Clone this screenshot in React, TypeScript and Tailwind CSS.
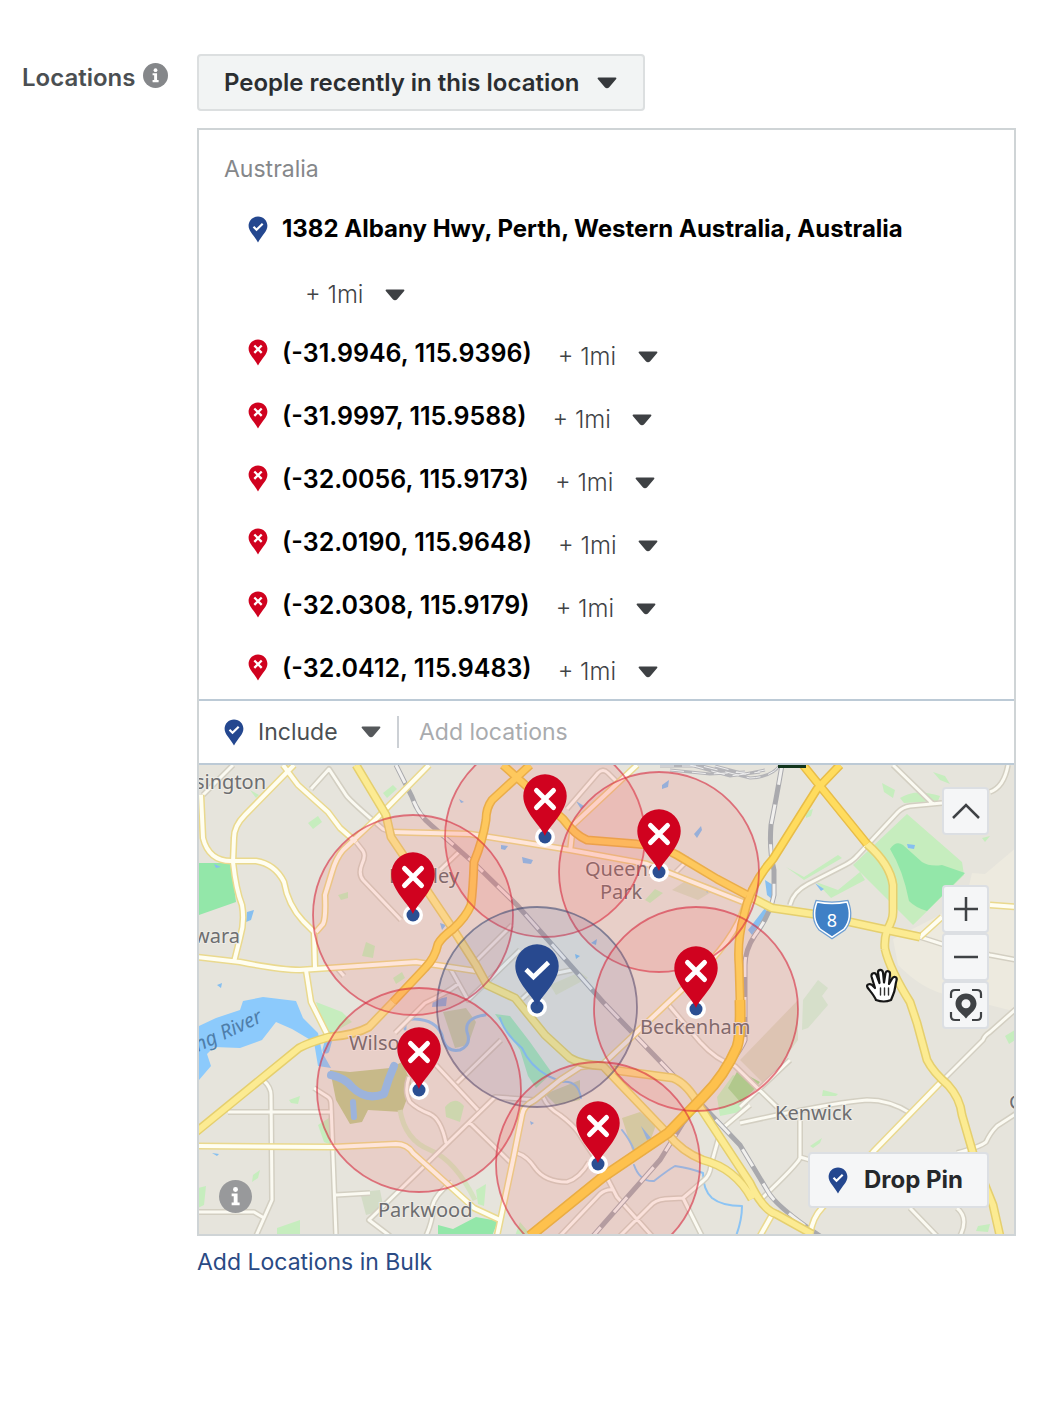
import React from 'react';

type PinKind = 'include' | 'exclude';

const excluded = [
  '(-31.9946, 115.9396)',
  '(-31.9997, 115.9588)',
  '(-32.0056, 115.9173)',
  '(-32.0190, 115.9648)',
  '(-32.0308, 115.9179)',
  '(-32.0412, 115.9483)',
];

const mapPins: { x: number; y: number; r: number; kind: PinKind }[] = [
  { x: 545, y: 837, r: 100, kind: 'exclude' },
  { x: 659, y: 872, r: 100, kind: 'exclude' },
  { x: 413, y: 915, r: 100, kind: 'exclude' },
  { x: 537, y: 1007, r: 100, kind: 'include' },
  { x: 696, y: 1009, r: 102, kind: 'exclude' },
  { x: 419, y: 1090, r: 102, kind: 'exclude' },
  { x: 598, y: 1164, r: 102, kind: 'exclude' },
];

const minorRoads = [
  'M233 765L203 795',
  'M311 789L329 769L346 795Q350 801 383 829L391 832',
  'M356 842L363 851Q366 856 362 864Q358 874 363 880L401 920',
  'M567 809L598 773Q603 768 608 773L617 782',
  'M676 872L690 858',
  'M893 765L933 804',
  'M942 803L910 806Q903 807 898 812L858 855Q853 861 845 865L808 884Q793 892 790 905',
  'M1008 765Q1004 787 990 792',
  'M920 937L945 945L990 955L1017 960',
  'M228 1112H331',
  'M263 1080Q271 1087 271 1095L272 1200L256 1236',
  'M314 1088L328 1097Q331 1099 331 1104L336 1236',
  'M336 1195L370 1193',
  'M198 1212H254L264 1218',
  'M390 1236L369 1220L495 1097L535 1100',
  'M436 1065L478 1110',
  'M469 1122L510 1162',
  'M457 1083L501 1040',
  'M409 1077Q404 1092 410 1102Q417 1109 430 1114Q441 1119 446 1143',
  'M426 1236Q434 1218 432 1208Q434 1195 452 1182',
  'M543 1097Q548 1108 560 1115Q572 1124 578 1132L603 1170L617 1197L652 1236',
  'M517 1153Q527 1156 535 1168Q545 1182 567 1182Q580 1178 589 1162',
  'M620 1236L650 1206Q655 1200 665 1199L683 1198L703 1181Q710 1176 711 1165L720 1133',
  'M683 1198L702 1236',
  'M560 1236L600 1194Q606 1189 613 1190',
  'M667 1003L700 1042Q716 1060 735 1066L777 1107',
  'M740 1123L777 1115Q840 1102 867 1100Q890 1100 910 1113',
  'M940 1083L983 1040Q984 1036 990 1032L1017 1008',
  'M1017 1113L997 1126Q990 1133 986 1142Q980 1147 957 1153',
  'M800 1113V1158Q798 1164 760 1200',
  'M740 1107L790 1060',
  'M724 1127L750 1105',
  'M800 1157L810 1160',
  'M910 1208L937 1236',
  'M957 1208Q969 1218 960 1236',
  'M450 968L468 1000L520 950',
  'M395 1033L425 1003Q445 994 458 984',
  'M336 967L344 976',
  'M522 999L548 975L572 970',
  'M440 870L461 850',
  'M472 965L512 925',
];

const creamRoads = [
  'M294 765L245 815Q234 826 234 838L233 862Q236 890 242 905Q245 922 240 938L234 962',
  'M201 795L203 838Q209 862 233 861H256Q275 864 284 882Q288 905 303 921L314 932L315 968',
  'M283 765L298 785L328 812L340 828L356 842',
  'M429 765L376 819L343 850Q336 858 332 872L325 895Q326 918 323 924L316 932',
  'M196 957L240 962Q280 970 300 970L416 962L476 971',
  'M306 970L311 1002L328 1036',
  'M637 765L573 825L570 852',
  'M196 1146L333 1147L396 1144Q407 1144 413 1153L474 1208L500 1220',
  'M497 1236L513 1160L522 1115Q523 1106 535 1100L560 1080L580 1067L603 1064L690 982Q735 940 745 905',
  'M391 832L470 834L570 850L647 864L743 902',
  'M920 937L942 917',
  'M990 905L1017 907',
  'M940 1083L873 1152L822 1208Q812 1218 810 1236',
  'M773 1213L760 1236',
];

const yellowRoads = [
  'M356 765L386 815L391 837L453 929L476 965L487 985L515 998L545 1035L570 1058Q582 1065 603 1066L667 1133Q682 1152 703 1160Q735 1168 752 1199',
  'M613 1070L673 1078Q688 1084 700 1107L750 1183Q763 1210 776 1214L812 1234',
  'M885 949Q890 970 910 1002L917 1023L927 1060Q933 1072 948 1085Q960 1098 962 1115L975 1160L993 1205L1000 1236',
  'M745 894L772 908L813 914L887 930L920 937',
  'M867 844Q890 864 893 885V912Q893 920 887 930Q884 940 885 949',
  'M393 1002L369 1027Q355 1035 329 1037Q308 1043 299 1048L196 1132',
];

const goldRoads = [
  'M530 765L492 800Q486 808 486 820Q483 840 474 862Q473 890 471 905Q466 917 453 929Q442 937 438 944Q435 958 425 968L393 1002',
  'M503 765L563 819Q575 835 587 840L637 844Q660 845 677 855L717 879L747 895',
  'M840 765L817 789L773 859Q750 885 744 915Q737 940 739 965L740 1000Q741 1035 737 1047Q725 1075 703 1097L668 1133',
  'M803 765L867 844',
];

const railways = [
  'M396 765L412 797Q418 815 432 826L476 865L517 905L603 1002L700 1103L740 1145L767 1190Q775 1206 820 1236',
  'M782 765Q776 800 771 825Q769 850 774 870V895Q770 915 755 935Q745 950 745 965V1040Q740 1055 683 1123L660 1160L593 1236',
];

const railYard = [
  'M660 766L702 766L750 778Q772 777 780 765',
  'M670 770L710 774L745 772',
  'M690 765L730 776L760 772',
  'M715 766L745 774L765 770',
];

const lightParks = [
  'M907 814L962 862L964 875L913 925L853 865Z',
  'M316 1002L342 1012L352 1022L330 1034L320 1014Z',
  'M717 1097L733 1075L760 1085L740 1112L720 1116Z',
  'M318 1125L332 1116L334 1146L324 1142Z',
  'M277 1228L300 1220L300 1236H277Z',
  'M308 823L318 816L322 822L313 829Z',
  'M383 793L393 785L397 789L387 798Z',
  'M786 867L804 877L838 855L842 858L804 880Z',
  'M816 882L831 898L865 880L860 872L838 890Z',
  'M882 783L895 790L893 798L884 792Z',
  'M900 798Q915 788 940 796L938 801L904 803Z',
  'M933 772L945 776L950 784L940 780Z',
  'M1005 1036L1015 1030V1040L1009 1044Z',
  'M823 1090L838 1094L836 1096L822 1096Z',
  'M810 1146L822 1138L820 1143L813 1148Z',
  'M645 900L655 889L663 893L650 903Z',
  'M445 1107Q455 1095 464 1106L460 1122L446 1117Z',
  'M250 790L259 795L256 798Z',
  'M253 1175L260 1170L258 1178L252 1182Z',
  'M289 1100L300 1096L298 1104L291 1103Z',
  'M198 1188L206 1186L204 1205L198 1208Z',
  'M990 836L985 842L982 838Z',
  'M366 942L375 946L373 958L362 956Z',
  'M978 1226L990 1224L988 1232L976 1231Z',
  'M476 1190L486 1184L484 1206L478 1204Z',
  'M520 1222L532 1236H515Z',
  'M393 978L402 972L405 978L396 984Z',
  'M338 895L348 892L348 898L341 900Z',
  'M805 812L813 809L811 816L806 818Z',
];

const ponds = [
  'M440 923L446 925L442 930Z',
  'M247 912L254 910L251 920L246 922Z',
  'M522 857L533 860L531 864L523 863Z',
  'M662 785L669 780L668 787L662 789Z',
  'M694 834L701 826L702 830L697 838Z',
  'M576 801L584 806L581 809Z',
  'M501 845L508 846L505 850L501 849Z',
  'M907 844L915 845L914 849L908 848Z',
  'M815 883L824 889L821 891Z',
  'M765 880L773 885L773 900L767 895Z',
  'M748 930L765 908L767 913L752 935Z',
  'M591 943L597 939L596 945Z',
  'M575 954L580 956L576 959Z',
  'M705 887L710 889L707 893Z',
  'M641 1126L651 1138L647 1140Z',
  'M214 864L221 867L216 868Z',
  'M459 799L464 802L461 803Z',
  'M212 1153L219 1154L217 1156Z',
  'M217 985L222 983L221 988Z',
  'M433 1000L447 997L446 1006L432 1007Z',
  'M530 1121L534 1123L531 1125Z',
];

const placeNames = [
  { x: 195, y: 789, text: 'sington' },
  { x: 389, y: 883, text: 'Bentley' },
  { x: 194, y: 943, text: 'wara' },
  { x: 585, y: 876, text: 'Queens' },
  { x: 600, y: 899, text: 'Park' },
  { x: 349, y: 1050, text: 'Wilson' },
  { x: 640, y: 1034, text: 'Beckenham' },
  { x: 775, y: 1120, text: 'Kenwick' },
  { x: 378, y: 1217, text: 'Parkwood' },
  { x: 1009, y: 1109, text: 'G' },
];

const PinIcon: React.FC<{ kind: PinKind }> = ({ kind }) => (
  <svg viewBox="0 0 20 27" className="h-[27px] w-5 shrink-0" aria-hidden="true">
    <path
      d="M10 .5C4.700 .5.600 4.600.600 9.800c0 5.600 5.600 9.700 9.400 16.700 3.800-7 9.400-11.100 9.400-16.700C19.400 4.600 15.300.5 10 .5z"
      fill={kind === 'include' ? '#24478f' : '#d0021f'}
    />
    {kind === 'include' ? (
      <path d="M5.500 10.800l3 2.900 6.200-6" fill="none" stroke="#fff" strokeWidth="2.200" />
    ) : (
      <path d="M6.300 6.500l7.400 7.400M13.700 6.500l-7.400 7.400" stroke="#fff" strokeWidth="2.300" />
    )}
  </svg>
);

const Caret: React.FC<{ className?: string }> = ({ className = '' }) => (
  <svg viewBox="0 0 20 12" className={`pointer-events-none absolute right-0 h-3 w-5 ${className}`} aria-hidden="true">
    <path d="M1.500 1.500h17L11.500 9.600a2 2 0 0 1-3 0z" fill="currentColor" stroke="currentColor" strokeWidth="1.800" strokeLinejoin="round" />
  </svg>
);

const InfoIcon: React.FC<{ className: string }> = ({ className }) => (
  <svg viewBox="0 0 24 24" className={className} aria-hidden="true">
    <circle cx="12" cy="12" r="12" fill="currentColor" />
    <circle cx="12" cy="6.900" r="1.800" fill="#fff" />
    <path d="M9.200 9.800h4.300v6.600h1.500v2H9.200v-2h1.500v-4.600H9.200z" fill="#fff" />
  </svg>
);

const RadiusSelect: React.FC<{ name: string }> = ({ name }) => (
  <div className="relative flex items-center pt-2 text-[#3e4144]">
    <select
      aria-label={`Radius for ${name}`}
      className="appearance-none bg-transparent pr-[41px] text-2xl leading-8 font-light text-[#3f4346] outline-none"
    >
      <option>+ 1mi</option>
    </select>
    <Caret />
  </div>
);

const MapPin: React.FC<{ x: number; y: number; kind: PinKind }> = ({ x, y, kind }) => (
  <g transform={`translate(${x} ${y})`}>
    <circle r="10" fill="#fff" />
    <circle r="6.500" fill="#2b4f92" />
    <path
      d="M0-1C-4-11-21.700-25-21.700-41A21.700 21.700 0 0 1 21.700-41C21.700-25 4-11 0-1z"
      fill={kind === 'include' ? '#28498f' : '#d0021f'}
    />
    {kind === 'include' ? (
      <path d="M-11-37.500l7.500 7.500L11.500-44.500" fill="none" stroke="#fff" strokeWidth="4.600" />
    ) : (
      <path d="M-8.500-46.500l17 17M8.500-46.500l-17 17" stroke="#fff" strokeWidth="5" strokeLinecap="round" />
    )}
  </g>
);

const Roads: React.FC<{ paths: string[]; edge: string; fill: string; width: number }> = ({ paths, edge, fill, width }) => (
  <g fill="none" strokeLinejoin="round">
    <path d={paths.join('')} stroke={edge} strokeWidth={width + 3} />
    <path d={paths.join('')} stroke={fill} strokeWidth={width} />
  </g>
);

const StreetMap: React.FC = () => (
  <svg
    viewBox="199 765 815 469"
    preserveAspectRatio="xMidYMid slice"
    className="block h-[469px] w-full"
    role="img"
    aria-label="Map of the selected locations"
  >
    <rect x="0" y="600" width="1300" height="800" fill="#e6e4dc" />
    <path d="M1017 847L985 874L972 873L968 890L940 915L893 939L898 965Q925 992 950 995L1017 1012z" fill="#edeadf" />
    <path d="M802 1030L803 1000L818 980L828 988L822 996L828 1005L808 1028z" fill="#d6dfca" />
    <path d="M360 1192L380 1190L384 1210L366 1215z" fill="#d3dcc6" />
    <path d="M740 1060L798 1000V1040L765 1085z" fill="#d9d8c4" />
    <path d="M672 890L690 878L718 888L698 900z" fill="#d8dcc4" />

    {/* Parks and wetlands */}
    <path d={lightParks.join('')} fill="#c6edbe" />
    <path
      d="M890 849Q896 840 903 845L922 862Q930 867 942 865L965 873L927 911Q916 908 909 901Q903 870 890 849zM199 863H231L236 902L199 915zM438 1225L453 1229L476 1217L498 1221L492 1236H438z"
      fill="#93e7a9"
    />
    <path d="M728 1088L738 1070L760 1082L742 1104z" fill="#a5dc96" />
    <path d="M330 1070L350 1072L390 1068L402 1062L412 1085L402 1112L368 1110L362 1122L350 1124L336 1100z" fill="#bfcb92" />
    <path d="M443 1012L466 1008L476 1022L468 1045L455 1048zM545 1094L580 1080L580 1100L556 1105z" fill="#cad6b0" />
    <path d="M622 1118L640 1112L656 1125L645 1155L632 1150z" fill="#cfdcae" />
    <path d="M495 1014L510 1016L530 1042L552 1073L536 1088L528 1076L520 1050z" fill="#ace4ba" />
    <path d="M550 985L580 972L588 978L556 995z" fill="#dedfc6" />
    <path d="M400 1110Q405 1140 430 1150T475 1200" fill="none" stroke="#d4e3c0" strokeWidth="5" />

    {/* Rivers */}
    <path
      d="M199 1026L216 1018L240 1010L243 1001L263 997L296 1001L303 1018L318 1033L322 1052L331 1068L318 1066L314 1042L292 1029L276 1022L262 1040L240 1048L214 1047L207 1054L211 1066L199 1080z"
      fill="#8ccafc"
    />
    <g fill="none" stroke="#8cc4f4" strokeLinecap="round" strokeLinejoin="round">
      <path d="M331 1075Q345 1078 352 1087Q366 1101 384 1094Q388 1080 394 1066" strokeWidth="8" />
      <path d="M353 1102L354 1117" strokeWidth="6" />
      <path d="M326 1050L330 1035" strokeWidth="7" />
      <path d="M405 1029Q404 1018 415 1019Q436 1020 442 1035Q445 1053 460 1050Q472 1045 467 1032Q464 1018 485 1015" strokeWidth="3" />
      <path d="M500 1018Q505 1034 522 1048Q530 1066 548 1076L562 1082Q578 1080 581 1098" strokeWidth="2" />
      <path d="M622 1130Q630 1140 634 1150M634 1165Q640 1182 654 1181Q668 1170 675 1166Q690 1168 703 1173Q703 1190 712 1198Q722 1206 742 1206Q742 1220 736 1236" strokeWidth="2" />
    </g>
    <path d={ponds.join('')} fill="#86bff0" />

    {/* Roads and railways */}
    <Roads paths={minorRoads} edge="#d3cfc2" fill="#fbfaf2" width={3} />
    <g fill="none">
      <path d={railways.join('')} stroke="#a9a9ad" strokeWidth="5" />
      <path d={railways.join('')} stroke="#f1f0ee" strokeWidth="3" strokeDasharray="20 20" />
      <path d={railYard.join('')} stroke="#b4b4b8" strokeWidth="3" />
      <path d={railYard.join('')} stroke="#efefef" strokeWidth="1" strokeDasharray="14 8" />
    </g>
    <Roads paths={creamRoads} edge="#ead98e" fill="#fffef1" width={4} />
    <Roads paths={yellowRoads} edge="#e5cf6e" fill="#fceb92" width={6} />
    <Roads paths={goldRoads} edge="#e8bd48" fill="#ffdc5e" width={6} />
    <path d="M740 1000Q741 1035 737 1047Q725 1075 703 1097L668 1133L603 1177L530 1236" fill="none" stroke="#e8bc40" strokeWidth="11" />
    <path d="M740 1000Q741 1035 737 1047Q725 1075 703 1097L668 1133L603 1177L530 1236" fill="none" stroke="#ffd44c" strokeWidth="8" />
    <path d="M778 765h28v3h-28z" fill="#12351c" />

    {/* Route shield */}
    <path d="M817 902Q832 905 847 902Q853 918 844 929L832 937L820 929Q811 918 817 902z" fill="#3f80c6" stroke="#6f9fd2" strokeWidth="4" />
    <path d="M817 902Q832 905 847 902Q853 918 844 929L832 937L820 929Q811 918 817 902z" fill="#3f80c6" stroke="#fff" strokeWidth="1.500" />
    <text x="832" y="927" textAnchor="middle" className="fill-white font-['Noto_Sans',sans-serif] text-[18px]">8</text>

    <g className="fill-[#6d6e70] font-['Noto_Sans',sans-serif] text-[20px]" stroke="#eeece6" strokeWidth="2" paintOrder="stroke">
      {placeNames.map((place) => (
        <text key={place.text} x={place.x} y={place.y}>{place.text}</text>
      ))}
    </g>
    <text x="198" y="1052" transform="rotate(-25 198 1052)" className="fill-[#4f7eaa] font-['Noto_Sans',sans-serif] text-[20px] italic">
      ng River
    </text>

    {/* Targeting radius around each pin */}
    {mapPins.map((pin) => (
      <circle
        key={`${pin.x}-${pin.y}`}
        cx={pin.x}
        cy={pin.y}
        r={pin.r}
        fill={pin.kind === 'include' ? 'rgba(80,115,180,.14)' : 'rgba(245,85,90,.15)'}
        stroke={pin.kind === 'include' ? 'rgba(65,75,115,.6)' : 'rgba(214,40,62,.6)'}
        strokeWidth="1.800"
      />
    ))}
    {mapPins.map((pin) => (
      <MapPin key={`${pin.x}-${pin.y}`} x={pin.x} y={pin.y} kind={pin.kind} />
    ))}

    {/* Grab cursor */}
    <g transform="translate(866 968)" strokeLinejoin="round" strokeLinecap="round">
      <path
        d="M10 32C8 27 4 23 1.500 19.500C0 16.500 3.500 15 6 17L9 20L5.500 8.500C5 5 9 4 10.500 7L13.500 15L12 4.500C12 1 16.500 1 17 4.500L18 14.500L19.500 5C20.500 2 24.500 3 24 6.500L23 16L26.500 10C28.500 7.500 31.500 9.500 30.500 12.500C29 17 29.500 22 27 27L25 32Q18 35 10 32z"
        fill="#fff"
        stroke="#161616"
        strokeWidth="2.200"
      />
      <path d="M14.500 20v7M18.500 20v7M22.500 20v7" stroke="#333" strokeWidth="1.400" />
    </g>
  </svg>
);

const mapButton = 'flex w-[47px] items-center justify-center rounded-sm border-2 border-[#dcdfe3] bg-[#f5f6f7] text-[#3f4245]';

const App: React.FC = () => {
  return (
    <div className="flex items-start bg-white pt-[54px] pr-8 pb-16 font-['Inter',sans-serif] text-2xl leading-8">
      <div className="flex w-[197px] shrink-0 items-start gap-2 pt-2 pl-[22px]">
        <label htmlFor="location-type" className="font-semibold text-[#4b4f52]">Locations</label>
        <InfoIcon className="mt-px size-[25px] shrink-0 text-[#85878a]" />
      </div>

      <main className="min-w-0 flex-1">
        <div className="relative inline-flex items-center text-[#36393c]">
          <select
            id="location-type"
            className="h-[57px] appearance-none rounded-sm border-2 border-[#dcdfe0] bg-[#f2f4f4] pr-[63px] pl-[25px] font-semibold text-[#2b2e31] outline-none"
          >
            <option>People recently in this location</option>
          </select>
          <Caret className="mr-7" />
        </div>

        <div className="mt-[17px] border-2 border-[#cfd4d6]">
          <h2 className="pt-[23px] pl-[25px] text-[23px] text-[#85878a]">Australia</h2>

          <div className="mt-3 flex h-16 items-center gap-[14px] pl-[49px]">
            <PinIcon kind="include" />
            <p className="font-bold text-black">1382 Albany Hwy, Perth, Western Australia, Australia</p>
          </div>
          <div className="flex h-[60px] items-center pl-[106px]">
            <RadiusSelect name="1382 Albany Hwy" />
          </div>

          <ul>
            {excluded.map((coords) => (
              <li key={coords} className="flex h-[63px] items-center gap-[14px] pl-[49px]">
                <PinIcon kind="exclude" />
                <span className="mr-3 text-[25px] font-semibold text-black">{coords}</span>
                <RadiusSelect name={coords} />
              </li>
            ))}
          </ul>

          <div className="flex h-[66px] items-center border-y-2 border-[#bccad6] pl-[25px] text-[23px]">
            <PinIcon kind="include" />
            <div className="relative ml-[14px] flex items-center text-[#55585b]">
              <select aria-label="Include or exclude" className="appearance-none bg-transparent pr-[43px] text-[#4b4f52] outline-none">
                <option>Include</option>
              </select>
              <Caret />
            </div>
            <input
              type="text"
              aria-label="Add locations"
              placeholder="Add locations"
              className="ml-4 min-w-0 flex-1 border-l-2 border-[#ccd0d5] pl-5 outline-none placeholder:text-[#a9abae]"
            />
          </div>

          {/* Map with its controls */}
          <div className="relative overflow-hidden">
            <StreetMap />
            <button type="button" aria-label="Collapse map" className={`${mapButton} absolute top-[22px] right-[25px] h-12`}>
              <svg viewBox="0 0 30 18" className="h-[18px] w-[30px]" fill="none" stroke="currentColor" strokeWidth="2.500">
                <path d="M2 16L15 3l13 13" />
              </svg>
            </button>
            <div className="absolute top-[120px] right-[25px] flex flex-col">
              <button type="button" aria-label="Zoom in" className={`${mapButton} h-12`}>
                <svg viewBox="0 0 24 24" className="size-6" stroke="currentColor" strokeWidth="2.500">
                  <path d="M12 0v24M0 12h24" />
                </svg>
              </button>
              <button type="button" aria-label="Zoom out" className={`${mapButton} h-12`}>
                <svg viewBox="0 0 24 24" className="size-6" stroke="currentColor" strokeWidth="2.500">
                  <path d="M0 12h24" />
                </svg>
              </button>
              <button type="button" aria-label="Fit pins" className={`${mapButton} h-12`}>
                <svg viewBox="0 0 34 34" className="size-[34px]" fill="none" stroke="currentColor" strokeWidth="2.200">
                  <path d="M2 10V6q0-4 4-4h5M23 2h5q4 0 4 4v4M32 24v4q0 4-4 4h-5M11 32H6q-4 0-4-4v-4" />
                  <path
                    fillRule="evenodd"
                    d="M17 5.500c-6 0-10.500 4.500-10.500 10.300C6.500 22 12.500 25 17 30.500c4.500-5.500 10.500-8.500 10.500-14.700C27.500 10 23 5.500 17 5.500zm0 5.700a4.500 4.500 0 1 1 0 9 4.500 4.500 0 0 1 0-9z"
                    fill="currentColor"
                    stroke="none"
                  />
                </svg>
              </button>
            </div>
            <button type="button" aria-label="Map information" className="absolute bottom-[21px] left-5 text-[#98999b]">
              <InfoIcon className="size-[33px]" />
            </button>
            <button
              type="button"
              className="absolute right-[25px] bottom-[26px] flex h-14 items-center gap-4 rounded-sm border-2 border-[#dcdfe3] bg-[#f5f6f7] px-[18px] pr-6 font-bold text-[#26282b]"
            >
              <PinIcon kind="include" />
              Drop Pin
            </button>
          </div>
        </div>

        <a href="#bulk" className="mt-[10px] inline-block text-[23px] text-[#2a4a84]">Add Locations in Bulk</a>
      </main>
    </div>
  );
};

export default App;
